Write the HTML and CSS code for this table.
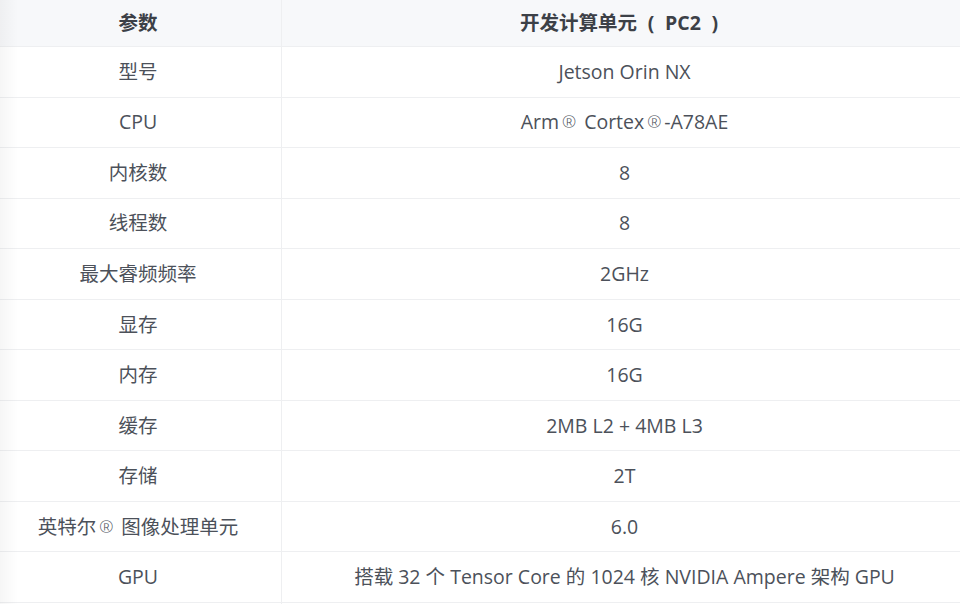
FILE: index.html
```html
<!DOCTYPE html>
<html lang="zh">
<head>
<meta charset="utf-8">
<link rel="stylesheet" href="styles.css">
</head>
<body>
<div class="wrap">
  <table class="spec">
    <thead>
      <tr><th class="c1">参数</th><th class="c2">开发计算单元<span class="fw">(</span>PC2<span class="fw">)</span></th></tr>
    </thead>
    <tbody>
      <tr><td>型号</td><td>Jetson Orin NX</td></tr>
      <tr><td>CPU</td><td>Arm<span class="reg">®</span> Cortex<span class="reg">®</span>-A78AE</td></tr>
      <tr><td>内核数</td><td>8</td></tr>
      <tr><td>线程数</td><td>8</td></tr>
      <tr><td>最大睿频频率</td><td>2GHz</td></tr>
      <tr><td>显存</td><td>16G</td></tr>
      <tr><td>内存</td><td>16G</td></tr>
      <tr><td>缓存</td><td>2MB L2 + 4MB L3</td></tr>
      <tr><td>存储</td><td>2T</td></tr>
      <tr><td>英特尔<span class="reg">®</span> 图像处理单元</td><td>6.0</td></tr>
      <tr><td>GPU</td><td>搭载 32 个 Tensor Core 的 1024 核 NVIDIA Ampere 架构 GPU</td></tr>
      <tr><td></td><td></td></tr>
    </tbody>
  </table>
  <div class="shade"></div>
</div>
</body>
</html>
```
FILE: styles.css
```css
html, body {
  margin: 0;
  padding: 0;
  background: #ffffff;
  overflow: hidden;
}
.wrap {
  position: relative;
  width: 960px;
  height: 604px;
  overflow: hidden;
}
.spec {
  border-collapse: collapse;
  table-layout: fixed;
  width: 974px;
  margin-left: -6px;
  margin-top: -5px;
  font-family: "Open Sans", "Noto Sans CJK SC", sans-serif;
  font-size: 19.5px;
  color: #4c515a;
}
.spec th, .spec td {
  height: 49.55px;
  padding: 0;
  text-align: center;
  vertical-align: middle;
  border: 1px solid #eeeff1;
  line-height: 24px;
}
.spec th {
  background: #f7f8fa;
  font-weight: 700;
  color: #3c4047;
  height: 46px;
  padding-top: 4px;
}
.c1 { width: 286px; }
.fw {
  display: inline-block;
  width: 28px;
  text-align: center;
}
.reg {
  display: inline-block;
  width: 20px;
  text-align: center;
  font-size: 17px;
  font-weight: 300;
  vertical-align: 1px;
}
.shade {
  position: absolute;
  left: 0;
  top: 0;
  bottom: 0;
  width: 18px;
  background: linear-gradient(to right, rgba(0,0,0,0.035), rgba(0,0,0,0));
  pointer-events: none;
}
```
